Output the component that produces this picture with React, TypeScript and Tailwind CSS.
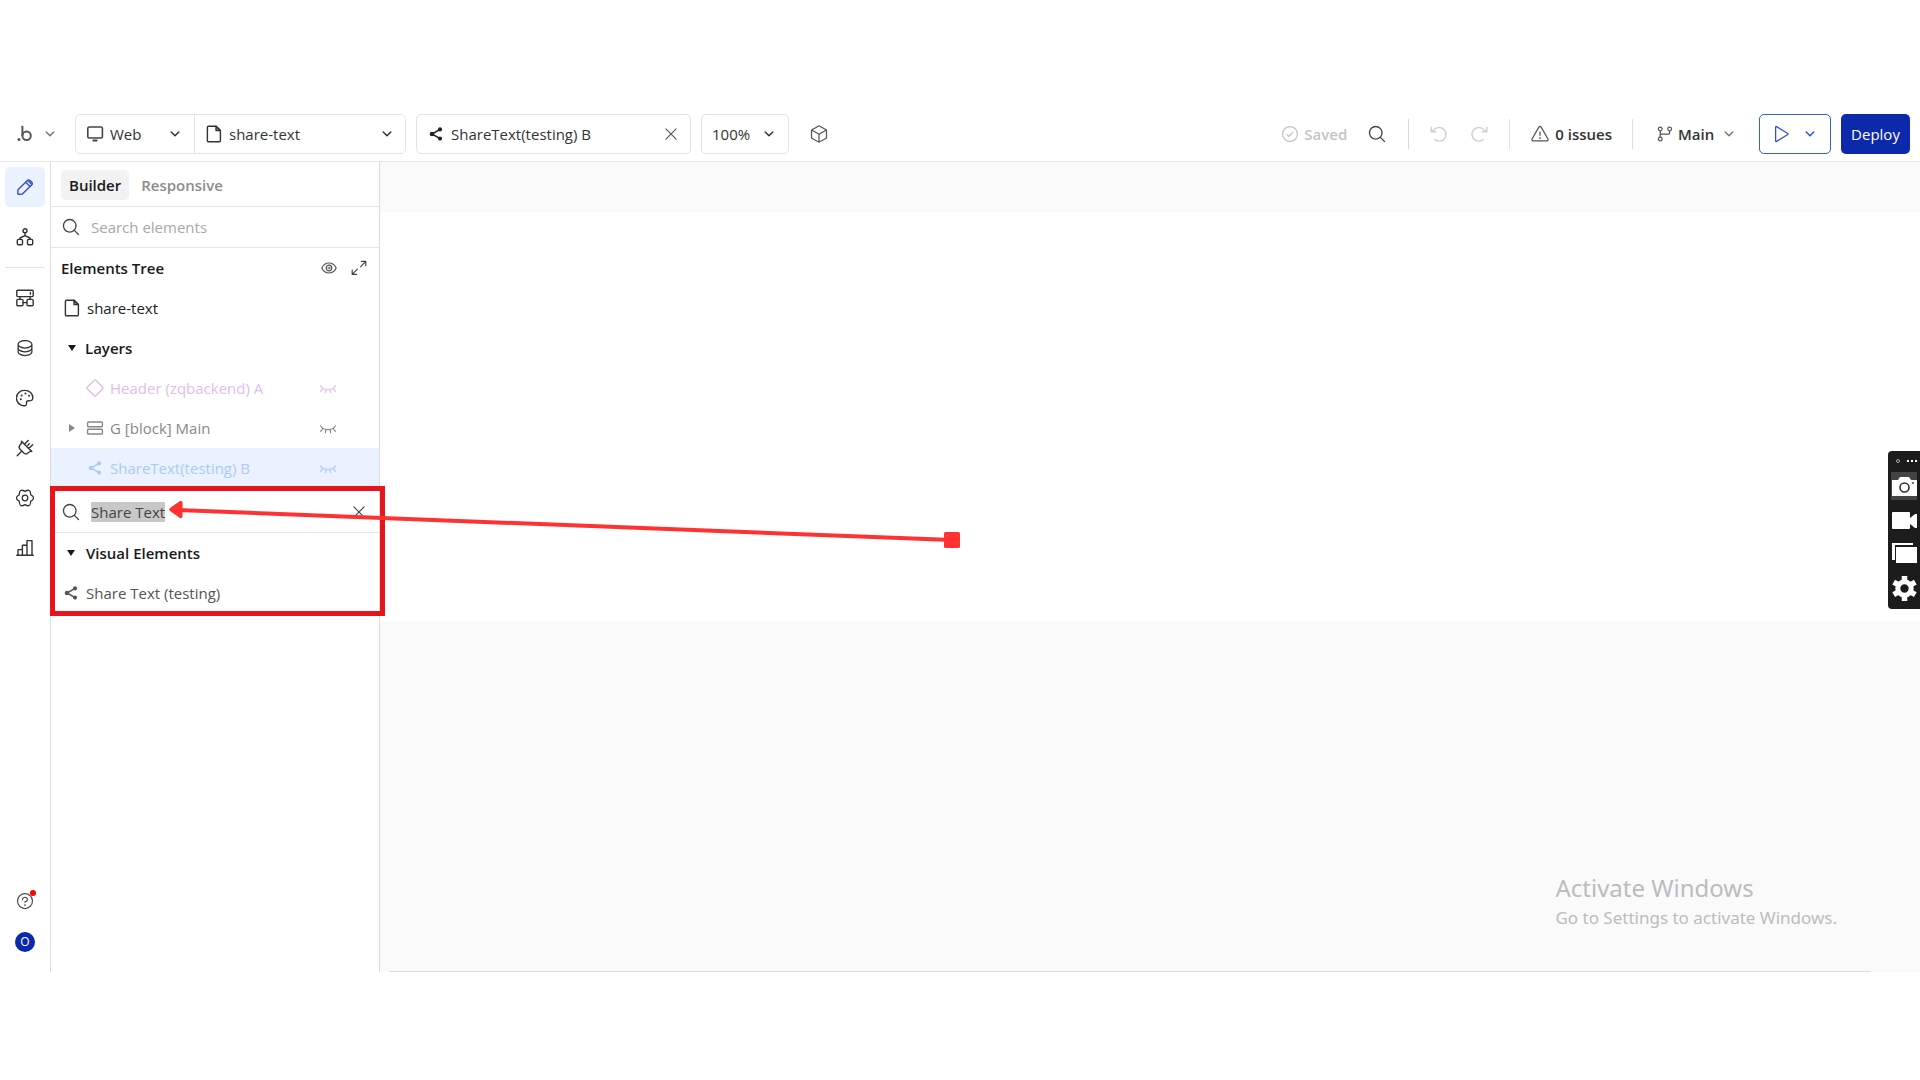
import React, { useEffect, useRef } from 'react';
import {
  PiCheckCircle,
  PiCube,
  PiDatabase,
  PiGitBranch,
  PiMagnifyingGlass,
  PiPlay,
  PiQuestion,
  PiWarning,
  PiX,
} from 'react-icons/pi';

interface IconProps {
  className?: string;
  children?: React.ReactNode;
}

// Shared 18px outline icon frame
const Icon: React.FC<IconProps> = ({ className = '', children }) => (
  <svg
    viewBox="0 0 18 18"
    className={`size-[18px] shrink-0 ${className}`}
    fill="none"
    stroke="currentColor"
    strokeWidth="1.4"
    strokeLinecap="round"
    strokeLinejoin="round"
    aria-hidden="true"
  >
    {children}
  </svg>
);

const Caret: React.FC<IconProps> = ({ className = '' }) => (
  <svg
    viewBox="0 0 12 12"
    className={`size-3 shrink-0 ${className}`}
    fill="none"
    stroke="currentColor"
    strokeWidth="1.5"
    strokeLinecap="round"
    strokeLinejoin="round"
    aria-hidden="true"
  >
    <path d="M2.2 4 6 7.8 9.8 4" />
  </svg>
);

const LogoIcon = () => (
  <svg viewBox="0 0 16 18" className="h-[18px] w-4 text-[#555]" fill="none" stroke="currentColor" aria-hidden="true">
    <circle cx="2" cy="14.6" r="1.5" fill="currentColor" stroke="none" />
    <path d="M5.4 .8v10" strokeWidth="2" />
    <circle cx="9.6" cy="10.8" r="4.2" strokeWidth="2" />
  </svg>
);

const MonitorIcon = () => (
  <Icon className="text-[#444]">
    <rect x="1.8" y="2" width="14.6" height="11" rx="1.4" strokeWidth="1.6" />
    <path d="M7.4 15.4h3.2" strokeWidth="2" />
  </Icon>
);

const FileIcon = () => (
  <Icon className="text-[#333]">
    <path d="M2.4 2.2a1 1 0 0 1 1-1H11l4.4 4.4v10.2a1 1 0 0 1-1 1H3.4a1 1 0 0 1-1-1z" />
    <path d="M11 1.2v4.4h4.4z" fill="currentColor" fillOpacity="0.5" />
  </Icon>
);

const ShareIcon: React.FC<IconProps> = ({ className }) => (
  <Icon className={className}>
    <path d="M13.2 4.4 5 9l8.2 4.6" strokeWidth="1.5" />
    <g fill="currentColor" stroke="none">
      <circle cx="13" cy="4.4" r="2.1" />
      <circle cx="5" cy="9" r="2.3" />
      <circle cx="13" cy="13.6" r="2.1" />
    </g>
  </Icon>
);

const PencilIcon = () => (
  <Icon className="text-[#3a4fc4]">
    <path d="M2 11.8 11.4 2.400a1.800 1.800 0 0 1 2.600 0l1.800 1.800a1.800 1.800 0 0 1 0 2.600L6.400 16l-4 .3a.6.6 0 0 1-.6-.6z" />
    <path d="m9.800 4.200 4.200 4.200M11.800 2.600l4 4" />
  </Icon>
);

const TreeIcon = () => (
  <Icon>
    <circle cx="9" cy="2.8" r="2" />
    <path d="M9 4.9v2.900M9 7.600 4 10v1M9 7.600l5 2.400v1" />
    <rect x="1.3" y="11.4" width="5.2" height="5.4" rx="1.2" />
    <rect x="11.5" y="11.4" width="5.2" height="5.4" rx="1.2" />
  </Icon>
);

const ServerIcon = () => (
  <Icon>
    <rect x="0.8" y="1.2" width="16.4" height="6.4" rx="1" />
    <path d="M14.4 3.4v1.8M4 7.6v2.6M14 7.6v2.6M7 13.6h4" />
    <rect x="0.8" y="10.4" width="6.2" height="6.4" rx="1" />
    <rect x="11" y="10.4" width="6.2" height="6.4" rx="1" />
  </Icon>
);

const PaletteIcon = () => (
  <Icon>
    <path d="M9 1.4a7.7 7.7 0 1 0 .6 15.2c1.1-.3 1-1.5.9-2.4-.2-1.7.7-2.6 2.3-2.4 1.7.3 4-.1 4-3C16.8 4.6 13.4 1.4 9 1.4z" />
    <g fill="currentColor" stroke="none">
      <circle cx="9.4" cy="4.6" r="1" />
      <circle cx="5.6" cy="6.4" r="1" />
      <circle cx="4.8" cy="10.2" r="1" />
      <circle cx="13" cy="6.8" r="1" />
    </g>
  </Icon>
);

const PlugIcon = () => (
  <Icon>
    <path d="M6.200 3 3.800 6.400a3 3 0 0 0 .2 3.800l3.800 3.800a3 3 0 0 0 3.800.2l3.400-2.400" />
    <path d="M5.200 12.800 1.200 16.800M5.400 2.200 15.800 12.600M8.400 5.200l3.800-3.800M12.800 9.600l3.800-3.800M11.800 6.200l1.400-1.400" />
  </Icon>
);

const GearIcon = () => (
  <Icon>
    <path
      d="M14.7 12.3Q14.8 19 9 15.600Q3.200 19 3.300 12.300Q-2.500 9 3.300 5.700Q3.200-1 9 2.400Q14.800-1 14.700 5.700Q20.500 9 14.700 12.300z"
      strokeWidth="1.300"
    />
    <circle cx="9" cy="9" r="2.800" strokeWidth="1.300" />
  </Icon>
);

const BarsIcon = () => (
  <Icon>
    <path d="M.8 16.2h16.400M2 16v-5.400h4.400V16M6.400 16V6.200H11V16M11 16V1.600h5V16" />
  </Icon>
);

const UndoIcon: React.FC<IconProps> = ({ className }) => (
  <Icon className={className}>
    <path d="M1.200 2.200v4.600h4.600M1.600 6.600 5 4a6.800 6.800 0 1 1 0 10.600" strokeWidth="1.4" />
  </Icon>
);

const EyeIcon = () => (
  <Icon className="text-[#555]">
    <path d="M1.800 9C3.400 5.600 6 4 9 4s5.600 1.600 7.200 5c-1.600 3.400-4.200 5-7.200 5S3.400 12.400 1.800 9z" strokeWidth="1.2" />
    <circle cx="9" cy="9" r="2.8" strokeWidth="1.2" />
    <circle cx="9" cy="9" r="1" strokeWidth="0.8" />
  </Icon>
);

const EyeClosedIcon = () => (
  <Icon>
    <path
      d="M1.400 6.800C3 9.400 5.600 10.600 9 10.600s6-1.200 7.600-3.800M4 9.400l-2.400 3M7 10.600l-.6 3M11 10.600l.6 3M14 9.400l2.400 3"
      strokeWidth="1.2"
    />
  </Icon>
);

const ExpandIcon = () => (
  <Icon className="text-[#444]">
    <path d="M11.400 2.400h4.400v4.400M15.600 2.600l-5 5M6.600 15.400H2.200V11M2.400 15.200l5-5" strokeWidth="1.2" />
  </Icon>
);

const DiamondIcon = () => (
  <Icon>
    <path d="M8.300 1.300a1 1 0 0 1 1.400 0l7 7a1 1 0 0 1 0 1.400l-7 7a1 1 0 0 1-1.400 0l-7-7a1 1 0 0 1 0-1.400z" />
  </Icon>
);

const GroupIcon = () => (
  <Icon>
    <rect x="1.6" y="3" width="14.8" height="4.8" rx="0.8" />
    <rect x="1.6" y="10.2" width="14.8" height="4.8" rx="0.8" />
  </Icon>
);

const Triangle: React.FC<IconProps> = ({ className = '' }) => (
  <svg viewBox="0 0 8 6" className={`h-[6px] w-2 shrink-0 ${className}`} fill="currentColor" aria-hidden="true">
    <path d="M0 0h8L4 6z" />
  </svg>
);

interface DropdownProps {
  label: string;
  value: string;
  className: string;
  caretClass: string;
}

// Native select with the arrow drawn on top of it
const Dropdown: React.FC<DropdownProps> = ({ label, value, className, caretClass }) => (
  <>
    <select
      aria-label={label}
      defaultValue={value}
      className={`h-full appearance-none bg-transparent outline-none ${className}`}
    >
      <option>{value}</option>
    </select>
    <Caret className={`pointer-events-none absolute top-1/2 -translate-y-1/2 ${caretClass}`} />
  </>
);

const Header = () => (
  <header className="flex h-[54px] shrink-0 items-center border-b border-[#e6e6e6] pr-[10px] pb-[2px] pl-[17px] text-[#333]">
    <button type="button" aria-label="Main menu" className="flex items-center gap-[11px]">
      <LogoIcon />
      <Caret className="text-[#777]" />
    </button>

    <div className="ml-[19px] flex h-10 rounded-[5px] border border-[#e3e3e3]">
      <div className="relative flex w-[119px] items-center border-r border-[#e3e3e3] pl-[10px]">
        <MonitorIcon />
        <Dropdown label="Platform" value="Web" className="w-full pl-[6px]" caretClass="right-[13px]" />
      </div>
      <div className="relative flex w-[210px] items-center pl-[10px]">
        <FileIcon />
        <Dropdown label="Page" value="share-text" className="w-full pl-[6px]" caretClass="right-3" />
      </div>
    </div>

    <div className="ml-[10px] flex h-10 w-[275px] items-center rounded-[5px] border border-[#e3e3e3] pr-[10px] pl-[10px]">
      <ShareIcon className="text-[#222]" />
      <span className="ml-[6px] flex-1">ShareText(testing) B</span>
      <button type="button" aria-label="Close element">
        <PiX className="size-[18px] text-[#555]" />
      </button>
    </div>

    <div className="relative ml-[10px] flex h-10 w-[88px] items-center rounded-[5px] border border-[#e3e3e3]">
      <Dropdown label="Zoom" value="100%" className="w-full pl-[10px]" caretClass="right-[13px]" />
    </div>

    <button type="button" aria-label="Components" className="ml-5">
      <PiCube className="size-5 text-[#555]" />
    </button>

    <div className="ml-auto flex items-center font-semibold">
      <PiCheckCircle className="size-5 text-[#c4c4c4]" />
      <span className="ml-1 text-[#c4c4c4]">Saved</span>
      <button type="button" aria-label="Search" className="ml-5">
        <PiMagnifyingGlass className="size-5 text-[#444]" />
      </button>
      <div className="ml-[21px] h-[30px] w-px bg-[#d9d9d9]" />
      <button type="button" aria-label="Undo" className="ml-[21px]">
        <UndoIcon className="text-[#cfcfcf]" />
      </button>
      <button type="button" aria-label="Redo" className="ml-[22px]">
        <UndoIcon className="-scale-x-100 text-[#cfcfcf]" />
      </button>
      <div className="ml-[21px] h-[30px] w-px bg-[#e0e0e0]" />
      <PiWarning className="ml-5 size-5 text-[#555]" />
      <span className="ml-[5px]">0 issues</span>
      <div className="ml-5 h-[30px] w-px bg-[#e0e0e0]" />
      <div className="relative ml-[21px] flex h-10 w-[81px] items-center">
        <PiGitBranch className="size-5 shrink-0 text-[#555]" />
        <Dropdown label="Branch" value="Main" className="w-full pl-1 font-semibold" caretClass="right-0 text-[#777]" />
      </div>
      <button
        type="button"
        aria-label="Preview"
        className="ml-6 flex h-10 w-[72px] items-center justify-between rounded-[5px] border border-[#2f62dc] pr-[14px] pl-[10px] text-[#3350d0]"
      >
        <PiPlay className="size-5" />
        <Caret />
      </button>
      <button type="button" className="ml-[10px] h-10 w-[69px] rounded-[5px] bg-[#0c29ab] font-medium text-white">
        Deploy
      </button>
    </div>
  </header>
);

const railButton = 'flex size-10 items-center justify-center rounded-[5px]';

const Rail = () => (
  <nav
    aria-label="Editor sections"
    className="flex w-[51px] shrink-0 flex-col items-center gap-[10px] border-r border-[#dcdcdc] pt-[5px] pb-[14px] text-[#333]"
  >
    <button type="button" aria-label="Design" className={`${railButton} bg-[#eaf2ff]`}>
      <PencilIcon />
    </button>
    <button type="button" aria-label="Workflow" className={railButton}>
      <TreeIcon />
    </button>
    <div className="h-px w-10 bg-[#e3e3e3]" />
    <button type="button" aria-label="Backend" className={railButton}>
      <ServerIcon />
    </button>
    <button type="button" aria-label="Data" className={railButton}>
      <PiDatabase className="size-5" />
    </button>
    <button type="button" aria-label="Styles" className={railButton}>
      <PaletteIcon />
    </button>
    <button type="button" aria-label="Plugins" className={railButton}>
      <PlugIcon />
    </button>
    <button type="button" aria-label="Settings" className={railButton}>
      <GearIcon />
    </button>
    <button type="button" aria-label="Logs" className={railButton}>
      <BarsIcon />
    </button>
    <button type="button" aria-label="Help" className="relative mt-auto flex size-[30px] items-center justify-center">
      <PiQuestion className="size-5 text-[#555]" />
      <span className="absolute top-1 right-1 size-[6px] rounded-full bg-[#ff0000]" />
    </button>
    <div className="flex h-8 items-center">
      <span className="flex size-5 items-center justify-center rounded-full bg-[#0c29ab] text-xs text-white">O</span>
    </div>
  </nav>
);

const SearchResults = () => {
  const inputRef = useRef<HTMLInputElement>(null);

  // Keep the query selected so typing replaces it
  useEffect(() => {
    inputRef.current?.focus();
    inputRef.current?.select();
  }, []);

  return (
    <section className="relative">
      <div className="flex h-[45px] items-center border-b border-[#e6e6e6] pt-1 pr-[11px] pl-[10px]">
        <PiMagnifyingGlass className="size-5 shrink-0 text-[#444]" />
        <input
          ref={inputRef}
          type="text"
          aria-label="Search new elements"
          defaultValue="Share Text"
          className="ml-[10px] w-full min-w-0 text-[#444] outline-none selection:bg-[#c8c8c8] selection:text-[#444]"
        />
        <button type="button" aria-label="Clear search">
          <PiX className="size-[18px] text-[#444]" />
        </button>
      </div>
      <h2 className="flex h-10 items-center gap-[11px] pl-4 font-semibold text-[#1a1a1a]">
        <Triangle />
        Visual Elements
      </h2>
      <div className="flex h-10 items-center gap-[6px] pl-[11px] text-[#555]">
        <ShareIcon />
        Share Text (testing)
      </div>

      {/* Highlight frame */}
      <div className="pointer-events-none absolute -top-[2px] -right-[6px] -bottom-[3px] -left-px z-10 border-[5px] border-[#e8141c]" />

      {/* Pointer line */}
      <svg className="pointer-events-none absolute top-0 left-[116px] z-20 h-[70px] w-[800px]" viewBox="0 0 800 70" aria-hidden="true">
        <path d="M10 22 785 52" stroke="#ff3131" strokeWidth="4" />
        <path d="m3 20.5 10-7q2-1 2 1v14q0 2-2 1l-10-7q-1-1 0-2z" fill="#ff3131" stroke="#ff3131" />
        <rect x="777" y="44" width="16" height="16" rx="1.5" fill="#ff3131" />
      </svg>
    </section>
  );
};

const Panel = () => (
  <aside className="flex w-[329px] shrink-0 flex-col border-r border-[#dcdcdc] text-[#222]">
    <div className="flex h-[45px] items-center gap-1 border-b border-[#e6e6e6] pt-px pl-[10px] font-semibold">
      <button type="button" className="h-[30px] rounded-[5px] bg-[#f2f2f2] px-2 text-[#1a1a1a]">
        Builder
      </button>
      <button type="button" className="h-[30px] px-2 text-[#8c8c8c]">
        Responsive
      </button>
    </div>
    <div className="flex h-[41px] items-center border-b border-[#e6e6e6] pl-[10px]">
      <PiMagnifyingGlass className="size-5 shrink-0 text-[#444]" />
      <input
        type="text"
        aria-label="Search elements"
        placeholder="Search elements"
        className="ml-[10px] w-full min-w-0 outline-none placeholder:text-[#a8a8a8]"
      />
    </div>

    <div className="flex h-10 items-center pr-[11px] pl-[10px]">
      <h2 className="flex-1 font-semibold text-[#1a1a1a]">Elements Tree</h2>
      <button type="button" aria-label="Toggle visibility">
        <EyeIcon />
      </button>
      <button type="button" aria-label="Expand tree" className="ml-3">
        <ExpandIcon />
      </button>
    </div>
    <ul>
      <li className="flex h-10 items-center gap-[6px] pl-3">
        <FileIcon />
        share-text
      </li>
      <li className="flex h-10 items-center gap-[9px] pl-[17px] font-semibold text-[#1a1a1a]">
        <Triangle />
        Layers
      </li>
      <li className="flex h-10 items-center pr-[42px] pl-[35px] text-[#e2bdeb]">
        <DiamondIcon />
        <span className="ml-[6px] flex-1">Header (zqbackend) A</span>
        <EyeClosedIcon />
      </li>
      <li className="flex h-10 items-center pr-[42px] pl-[17px] text-[#888]">
        <Triangle className="-rotate-90" />
        <span className="ml-[10px] flex">
          <GroupIcon />
        </span>
        <span className="ml-[6px] flex-1">G [block] Main</span>
        <EyeClosedIcon />
      </li>
      <li className="flex h-10 items-center bg-[#eaf2ff] pr-[42px] pl-[35px] text-[#adc9f7]">
        <ShareIcon />
        <span className="ml-[6px] flex-1">ShareText(testing) B</span>
        <EyeClosedIcon />
      </li>
    </ul>
    <SearchResults />
  </aside>
);

const RecorderBar = () => (
  <div className="absolute top-[289px] right-0 flex w-8 flex-col items-center rounded-l-[4px] bg-[#1c1c1c] pb-[7px] text-white">
    <svg viewBox="0 0 32 21" className="h-[21px] w-8" aria-hidden="true">
      <circle cx="10" cy="10" r="1.5" fill="none" stroke="#aaa" />
      <path d="M19 9h2v2h-2zM23 9h2v2h-2zM27 9h2v2h-2z" fill="#fff" />
    </svg>
    <button type="button" aria-label="Take snapshot" className="bg-[#444]">
      <svg viewBox="0 0 26 28" className="h-7 w-[26px]" fill="#fff" aria-hidden="true">
        <path d="M1 8h6l2-3h9l2 3h6v16H1z" />
        <circle cx="13.5" cy="15.5" r="4.5" fill="none" stroke="#333" strokeWidth="1.6" />
        <circle cx="22" cy="11" r="0.9" fill="#333" />
      </svg>
    </button>
    <button type="button" aria-label="Record video" className="mt-3">
      <svg viewBox="0 0 26 18" className="h-[18px] w-[26px]" fill="#fff" aria-hidden="true">
        <path d="M2 0h16a1 1 0 0 1 1 1v5l5-4h2v14h-2l-5-4v4a1 1 0 0 1-1 1H2a1 1 0 0 1-1-1V1a1 1 0 0 1 1-1z" />
      </svg>
    </button>
    <button type="button" aria-label="Gallery" className="mt-3">
      <svg viewBox="0 0 26 22" className="h-[22px] w-[26px]" fill="#fff" aria-hidden="true">
        <path d="M1 1h21v2H4v15H1z" />
        <path d="M5 5h21v16H5z" />
      </svg>
    </button>
    <button type="button" aria-label="Recorder settings" className="mt-3">
      <svg viewBox="0 0 26 26" className="size-[26px]" fill="none" stroke="#fff" aria-hidden="true">
        <circle cx="13.5" cy="12.5" r="6.7" strokeWidth="5" />
        <path
          d="M13.5 0v5M13.5 20v5M2.700 6.200 7 8.700M20 16.200l4.300 2.500M2.700 18.700 7 16.200M20 8.700l4.300-2.500"
          strokeWidth="5.5"
        />
      </svg>
    </button>
  </div>
);

const Canvas = () => (
  <main className="relative flex-1 bg-[#fafafa] pt-[50px]">
    <div className="h-[409px] bg-white" />
    <div className="absolute right-[83px] bottom-[40px] font-['Noto_Sans',sans-serif] text-[#bcbcbc]">
      <p className="text-2xl">Activate Windows</p>
      <p className="text-[17px] leading-7">Go to Settings to activate Windows.</p>
    </div>
    <div className="absolute right-[49px] bottom-0 left-[9px] h-px bg-[#dcdcdc]" />
    <RecorderBar />
  </main>
);

export default function App() {
  return (
    <div className="flex min-h-screen flex-col bg-white py-[108px] font-['Open_Sans',sans-serif] text-[15px] leading-5">
      <Header />
      <div className="flex flex-1">
        <Rail />
        <Panel />
        <Canvas />
      </div>
    </div>
  );
}
